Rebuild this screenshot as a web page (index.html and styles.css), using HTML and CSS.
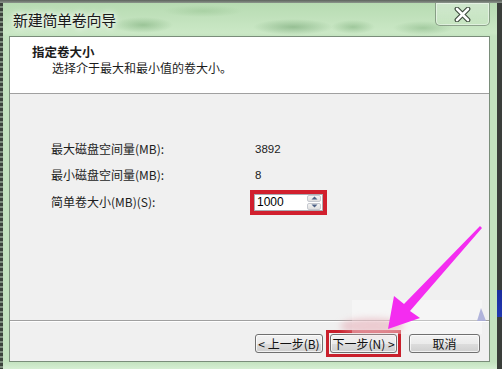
FILE: index.html
```html
<!DOCTYPE html>
<html lang="zh-CN">
<head>
<meta charset="utf-8">
<title>新建简单卷向导</title>
<link rel="stylesheet" href="styles.css">
</head>
<body>
<div class="screen">
  <div class="top-strip"></div>
  <div class="row">
    <div class="edge-left"></div>
    <div class="window">
      <div class="titlebar">
        <span class="title">新建简单卷向导</span>
        <div class="close">
          <svg width="17" height="15" viewBox="0 0 17 15">
            <path d="M3 2 L14 13 M14 2 L3 13" stroke="#3c4a3c" stroke-width="4.8" stroke-linecap="round"/>
            <path d="M3 2 L14 13 M14 2 L3 13" stroke="#ffffff" stroke-width="2.6" stroke-linecap="round"/>
          </svg>
        </div>
      </div>
      <div class="client">
        <div class="header">
          <div class="h-title">指定卷大小</div>
          <div class="h-sub">选择介于最大和最小值的卷大小。</div>
        </div>
        <div class="body">
          <div class="fields">
            <div class="label">最大磁盘空间量(MB):</div>
            <div class="value">3892</div>
            <div class="label">最小磁盘空间量(MB):</div>
            <div class="value">8</div>
            <div class="label">简单卷大小(MB)(S):</div>
            <div class="spin">
              <span class="spin-text">1000</span>
              <span class="spin-btns">
                <span class="spin-btn"><svg width="7" height="4" viewBox="0 0 7 4"><path d="M0.5 3.5 L3.5 0.5 L6.5 3.5 Z" fill="#4d6185"/></svg></span>
                <span class="spin-btn"><svg width="7" height="4" viewBox="0 0 7 4"><path d="M0.5 0.5 L3.5 3.5 L6.5 0.5 Z" fill="#4d6185"/></svg></span>
              </span>
            </div>
          </div>
        </div>
        <div class="footer">
          <button class="btn btn-back">&lt; 上一步(B)</button>
          <span class="mark">
            <button class="btn btn-next">下一步(N) &gt;</button>
          </span>
          <button class="btn btn-cancel">取消</button>
        </div>
      </div>
      <div class="bottom-frame"></div>
    </div>
    <div class="edge-right"></div>
  </div>
  <svg class="annot" width="502" height="369" viewBox="0 0 502 369">
    <defs>
      <filter id="blur" x="-50%" y="-50%" width="200%" height="200%"><feGaussianBlur stdDeviation="3"/></filter>
    </defs>
    <rect x="352" y="300" width="130" height="34" fill="#ffffff" opacity="0.35"/>
    <ellipse cx="372" cy="326" rx="32" ry="8" fill="#e4aab4" opacity="0.55" filter="url(#blur)"/>
    <polygon points="481,308 486,321 477,321" fill="#a8acd8" opacity="0.9"/>
    <polygon points="388,329 394,296 404,304 480,226 482,228 410,311 420,318" fill="#f42cf0"/>
  </svg>
</div>
</body>
</html>
```

FILE: styles.css
```css
* { box-sizing: border-box; }

html, body {
  margin: 0;
  padding: 0;
  background: #2e332e;
}

.screen {
  position: relative;
  width: 502px;
  height: 369px;
  overflow: hidden;
  display: flex;
  flex-direction: column;
  font-family: "Noto Sans CJK SC", "Noto Sans", sans-serif;
  background: #c4e3c0;
}

.top-strip {
  height: 3px;
  flex: none;
  background: linear-gradient(to bottom, #5d635d, #8c968c);
}

.row {
  display: flex;
  flex: 1;
}

.edge-left {
  width: 3px;
  flex: none;
  background: repeating-linear-gradient(to bottom, #3c443c 0, #3c443c 3px, #7d8c7d 3px, #7d8c7d 5px);
}

.edge-right {
  width: 5px;
  flex: none;
  background: linear-gradient(to bottom, #3a3e3a 0, #3a3e3a 287px, #1b2c9c 287px, #2238b0 314px, #3a3e3a 314px, #3a3e3a 100%);
}

.window {
  width: 494px;
  flex: none;
  display: flex;
  flex-direction: column;
  padding: 0 7px 0 6px;
  background:
    radial-gradient(ellipse 30px 8px at 140px 22px, rgba(120,170,118,0.55), transparent),
    radial-gradient(ellipse 40px 8px at 290px 24px, rgba(110,160,110,0.55), transparent),
    radial-gradient(ellipse 22px 7px at 350px 24px, rgba(120,170,118,0.5), transparent),
    radial-gradient(ellipse 30px 7px at 420px 25px, rgba(120,170,118,0.45), transparent),
    radial-gradient(ellipse 40px 6px at 200px 8px, rgba(150,195,145,0.5), transparent),
    linear-gradient(to bottom, #b7dbb2 0, #cbe8c6 30px, #c4e3c0 33px, #c4e3c0 calc(100% - 7px), #d6eed3 100%);
}

.titlebar {
  height: 33px;
  flex: none;
  display: flex;
  align-items: flex-start;
}

.title {
  padding: 7px 0 0 4px;
  font-size: 15px;
  line-height: 20px;
  color: #1a1a1a;
  text-shadow: 0 0 5px #ffffff, 0 0 8px #ffffff;
  letter-spacing: -0.3px;
}

.close {
  margin-left: auto;
  width: 55px;
  height: 23px;
  display: flex;
  align-items: center;
  justify-content: center;
  border: 1px solid rgba(80,100,80,0.55);
  border-top: none;
  border-radius: 0 0 5px 5px;
  background: linear-gradient(to bottom, rgba(255,255,255,0.35), rgba(200,230,195,0.3));
  box-shadow: inset 0 0 0 1px rgba(255,255,255,0.45);
}

.client {
  width: 481px;
  height: 326px;
  flex: none;
  display: flex;
  flex-direction: column;
  border: 1px solid #7a8d7a;
  background: #f0f0f0;
  font-size: 12px;
  color: #1c1c1c;
}

.header {
  height: 57px;
  flex: none;
  background: #ffffff;
  border-bottom: 1px solid #a0a0a0;
  padding: 7px 0 0 22px;
  line-height: 16px;
}

.h-title {
  font-weight: bold;
  font-size: 12.5px;
}

.h-sub {
  padding-left: 20px;
}

.body {
  height: 226px;
  flex: none;
  padding: 42px 0 0 41px;
}

.fields {
  display: grid;
  grid-template-columns: 203px auto;
  grid-template-rows: 26px 26px 27px;
  align-items: center;
  line-height: 16px;
}

.value {
  padding-left: 1px;
  font-family: "Liberation Sans", Arial, sans-serif;
  font-size: 11.5px;
}

.spin {
  width: 69px;
  height: 17px;
  display: flex;
  align-items: stretch;
  background: #ffffff;
  border: 1px solid #abadb3;
  outline: 4px solid #d1202e;
  margin-top: 1px;
}

.spin-text {
  flex: 1;
  padding-left: 2px;
  font-family: "Liberation Sans", Arial, sans-serif;
  font-size: 12px;
  line-height: 15px;
  color: #000;
}

.spin-btns {
  width: 15px;
  display: flex;
  flex-direction: column;
  gap: 1px;
  padding: 0 1px 0 0;
}

.spin-btn {
  flex: 1;
  display: flex;
  align-items: center;
  justify-content: center;
  background: linear-gradient(to bottom, #f4f4f4, #e0e0e0);
  border: 1px solid #c6c9d0;
  border-radius: 2px;
}

.footer {
  flex: 1;
  display: flex;
  justify-content: flex-end;
  align-items: center;
  border-top: 1px solid #a0a0a0;
  box-shadow: inset 0 1px 0 #ffffff;
  padding: 5px 9px 0 0;
}

.btn {
  display: block;
  height: 19px;
  padding: 0;
  font-family: "Noto Sans CJK SC", "Noto Sans", sans-serif;
  font-size: 12px;
  line-height: 16px;
  color: #111;
  border: 1px solid #707070;
  border-radius: 3px;
  background: linear-gradient(to bottom, #f2f2f2 0%, #ebebeb 50%, #dddddd 51%, #cfcfcf 100%);
  box-shadow: inset 0 0 0 1px rgba(255,255,255,0.7);
  white-space: nowrap;
}

.btn-back { width: 68px; margin-right: 3px; }

.mark {
  display: block;
  border: 3px solid #c91f2b;
  padding: 1px;
  margin-right: 8px;
}

.btn-next { width: 67px; }

.btn-cancel { width: 71px; }

.bottom-frame {
  flex: 1;
}

.annot {
  position: absolute;
  left: 0;
  top: 0;
  pointer-events: none;
}
```
